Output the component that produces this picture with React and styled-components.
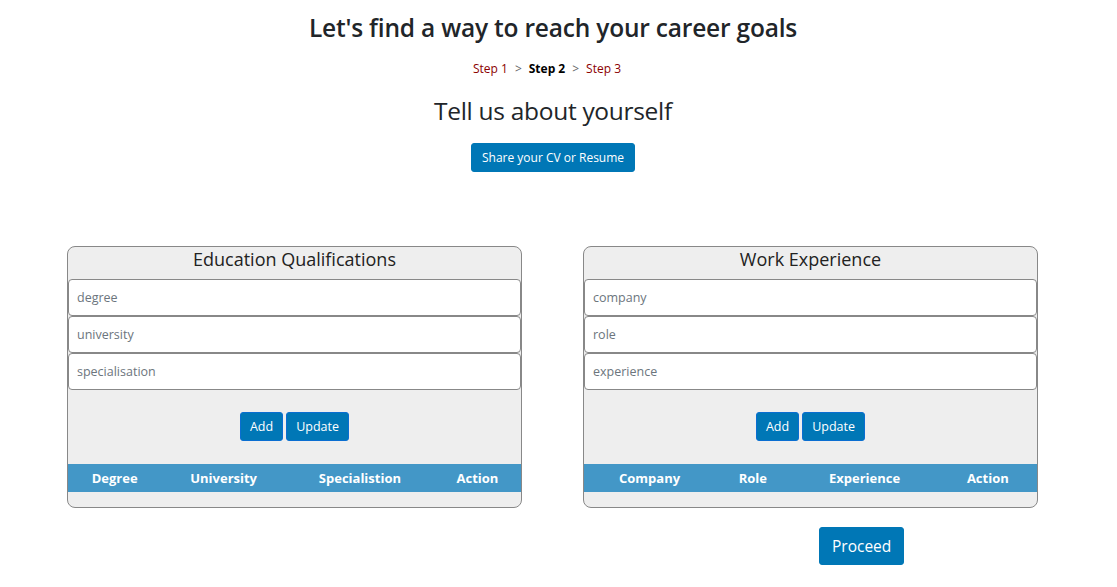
import React from 'react';
import styled, { createGlobalStyle } from 'styled-components';

const GlobalStyle = createGlobalStyle`
  body {
    margin: 0;
    background: #fff;
    font-family: "Open Sans", "Liberation Sans", sans-serif;
    color: #212529;
  }
`;

const Page = styled.div`
  width: 1106px;
  display: flex;
  flex-direction: column;
  align-items: center;
`;

const Title = styled.h1`
  margin: 13px 0 0;
  font-size: 24.5px;
  font-weight: 600;
  line-height: 30px;
  letter-spacing: -0.2px;
`;

const Steps = styled.div`
  margin-top: 18px;
  margin-right: 12px;
  display: flex;
  gap: 7px;
  font-size: 12px;
  line-height: 16px;
`;

const Step = styled.span`
  color: ${(p) => (p.$active ? '#000' : '#8b0000')};
  font-weight: ${(p) => (p.$active ? 700 : 400)};
`;

const Arrow = styled.span`
  color: #666;
`;

const SubTitle = styled.h2`
  margin: 17px 0 0;
  font-size: 24.5px;
  font-weight: 400;
  line-height: 34px;
  letter-spacing: -0.3px;
`;

const Button = styled.button`
  font-family: inherit;
  background: #0077b6;
  color: #fff;
  border: 1px solid ${(p) => (p.$outlined ? '#0a6ed1' : '#0077b6')};
  border-radius: 3px;
  padding: 0 ${(p) => p.$pad || 9}px;
  height: ${(p) => p.$h || 29}px;
  font-size: ${(p) => p.$size || 12.5}px;
  cursor: pointer;
`;

const ShareButton = styled(Button)`
  margin-top: 15px;
  padding: 0 10px;
  font-size: 12px;
`;

const Columns = styled.div`
  margin-top: 74px;
  align-self: stretch;
  padding-left: 67px;
  display: grid;
  grid-template-columns: 455px 455px;
  column-gap: 61px;
`;

const Card = styled.div`
  background: #eee;
  border: 1px solid #888;
  border-radius: 8px;
  padding-bottom: 15px;
  overflow: hidden;
`;

const CardTitle = styled.div`
  text-align: center;
  font-size: 18px;
  line-height: 24px;
  margin-bottom: 8px;
  color: #222;
`;

const Input = styled.input`
  display: block;
  box-sizing: border-box;
  width: 100%;
  height: 37px;
  border: 1px solid #888;
  border-radius: 4px;
  padding: 0 8px;
  font-family: inherit;
  font-size: 12.5px;
  background: #fff;
  &::placeholder {
    color: #6c757d;
  }
`;

const Actions = styled.div`
  display: flex;
  justify-content: center;
  gap: 3px;
  padding: 22px 0 23px;
`;

const Table = styled.table`
  width: 100%;
  border-collapse: collapse;
`;

const Th = styled.th`
  background: #4397c7;
  color: #fff;
  font-size: 13px;
  font-weight: 700;
  height: 28px;
  padding: 0 8px;
`;

const ProceedRow = styled.div`
  align-self: stretch;
  padding-left: 819px;
  margin-top: 19px;
`;

function FormCard({ title, fields, headers }) {
  return (
    <Card>
      <CardTitle>{title}</CardTitle>
      {fields.map((f) => (
        <Input key={f} placeholder={f} />
      ))}
      <Actions>
        <Button $outlined>Add</Button>
        <Button $outlined>Update</Button>
      </Actions>
      <Table>
        <thead>
          <tr>
            {headers.map((h) => (
              <Th key={h}>{h}</Th>
            ))}
          </tr>
        </thead>
      </Table>
    </Card>
  );
}

export default function App() {
  return (
    <Page>
      <GlobalStyle />
      <Title>Let's find a way to reach your career goals</Title>
      <Steps>
        <Step>Step 1</Step>
        <Arrow>&gt;</Arrow>
        <Step $active>Step 2</Step>
        <Arrow>&gt;</Arrow>
        <Step>Step 3</Step>
      </Steps>
      <SubTitle>Tell us about yourself</SubTitle>
      <ShareButton>Share your CV or Resume</ShareButton>
      <Columns>
        <FormCard
          title="Education Qualifications"
          fields={['degree', 'university', 'specialisation']}
          headers={['Degree', 'University', 'Specialistion', 'Action']}
        />
        <FormCard
          title="Work Experience"
          fields={['company', 'role', 'experience']}
          headers={['Company', 'Role', 'Experience', 'Action']}
        />
      </Columns>
      <ProceedRow>
        <Button $h={38} $size={15.5} $pad={12}>Proceed</Button>
      </ProceedRow>
    </Page>
  );
}
